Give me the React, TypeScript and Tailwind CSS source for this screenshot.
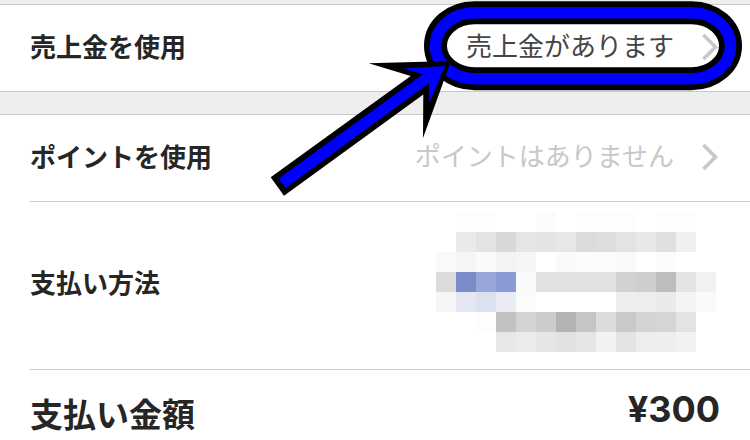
import type { ReactNode } from 'react';

// Blurred-out payment details, one hex per 20px cell
const MOSAIC: string[][] = [
  ['#ffffff', '#fdfdfd', '#fdfdfd', '#ffffff', '#ffffff', '#fbfbfb', '#ffffff', '#fdfdfd', '#fdfdfd', '#fdfdfd', '#ffffff', '#fdfdfd', '#fdfdfd', '#ffffff'],
  ['#ffffff', '#eaeaea', '#e3e3e3', '#d8d8d8', '#e5e5e5', '#e4e4e4', '#e7e7e7', '#dbdbdb', '#dddddd', '#e3e3e3', '#e8e8e8', '#dfdfdf', '#f0f0f0', '#ffffff'],
  ['#f9f9f9', '#f5f5f5', '#fafafa', '#f3f3f3', '#f5f5f5', '#ffffff', '#fafafa', '#fbfbfb', '#fbfbfb', '#f9f9f9', '#ffffff', '#fbfbfb', '#ffffff', '#ffffff'],
  ['#dddada', '#7a8cc8', '#99a6d9', '#8a9ad3', '#fafafa', '#e2e2e2', '#e2e2e2', '#e2e2e2', '#e2e2e2', '#d2d2d2', '#cecece', '#bdbdbd', '#e4e4e4', '#f1f1f1'],
  ['#f4f6f8', '#e4e7f3', '#dbe1ef', '#e9ecf6', '#fbfbfb', '#ffffff', '#ffffff', '#ffffff', '#ffffff', '#eeeeee', '#ededed', '#eaeaea', '#f4f4f4', '#fafafa'],
  ['#ffffff', '#ffffff', '#fdfdfd', '#c2c2c2', '#d3d3d3', '#cccccc', '#b3b3b3', '#c5c5c5', '#dcdcdc', '#c9c9c9', '#d4d4d4', '#d5d5d5', '#e3e3e3', '#ffffff'],
  ['#ffffff', '#ffffff', '#ffffff', '#e7e7e7', '#ebebeb', '#e6e6e6', '#e2e2e2', '#e5e5e5', '#f2f2f2', '#e4e4e4', '#ededed', '#eeeeee', '#f2f2f2', '#ffffff'],
];

function Chevron() {
  return (
    <svg className="h-[26px] w-4 shrink-0" viewBox="0 0 16 26" fill="none" aria-hidden="true">
      <path d="M1.5 1 13.5 13 1.5 25" stroke="#c7c7cc" strokeWidth="3.6" />
    </svg>
  );
}

function LinkRow({ label, value, children }: { label: string; value: ReactNode; children?: ReactNode }) {
  return (
    <a href="#" className="relative flex h-[86px] items-center pb-0.5 pl-[30px] pr-8">
      <span className="pb-0.5 font-bold">{label}</span>
      <span className="ml-auto mr-7 pb-1 font-normal text-[#444]">{value}</span>
      <Chevron />
      {children}
    </a>
  );
}

// Hand-drawn style marker: ring round the value plus an arrow pointing at it
function Marker() {
  return (
    <svg
      className="pointer-events-none absolute -top-[5px] right-0 z-10 h-[200px] w-[490px]"
      viewBox="260 0 490 200"
      fill="none"
      aria-hidden="true"
    >
      <rect x="435.5" y="12.7" width="295" height="66" rx="39" ry="33" stroke="#000" strokeWidth="23" />
      <rect x="435.5" y="12.7" width="295" height="66" rx="39" ry="33" stroke="#00f" strokeWidth="11.5" />
      <path d="M270.7 177.3 410.7 76 368.7 63.3 451 61 423 138 423.3 94.6 284 195.7Z" fill="#000" />
      <path d="M278.7 178.5 423 74.3 403.3 68.3 445 66 429.3 103 428.8 83.3 285.7 187.9Z" fill="#00f" />
    </svg>
  );
}

export default function App() {
  return (
    <main className="min-h-screen bg-white font-['Noto_Sans_CJK_JP',sans-serif] text-[26px] leading-9 text-[#262626]">
      <div className="h-1 bg-[#eee]" />

      {/* Sales balance */}
      <section className="border-y border-[#c8c7cc]">
        <LinkRow label="売上金を使用" value="売上金があります">
          <Marker />
        </LinkRow>
      </section>

      <div className="h-[22px] bg-[#eee]" />

      {/* Points, payment method, total */}
      <section className="border-t border-[#c8c7cc]">
        <LinkRow label="ポイントを使用" value={<span className="text-[#c7c7cc]">ポイントはありません</span>} />

        <div className="ml-[30px] flex h-[169px] items-center border-y border-[#c8c7cc] pb-[7px]">
          <span className="font-bold">支払い方法</span>
          <div className="ml-auto mr-[34px] grid grid-cols-[repeat(14,20px)]" aria-hidden="true">
            {MOSAIC.flat().map((color, i) => (
              <div key={i} className="h-5" style={{ backgroundColor: color }} />
            ))}
          </div>
        </div>

        <div className="flex h-[86px] items-center px-[30px]">
          <span className="text-[33px] font-bold">支払い金額</span>
          <span className="ml-auto pb-2 font-['Inter',sans-serif] text-[36px] font-bold">¥300</span>
        </div>
      </section>
    </main>
  );
}
